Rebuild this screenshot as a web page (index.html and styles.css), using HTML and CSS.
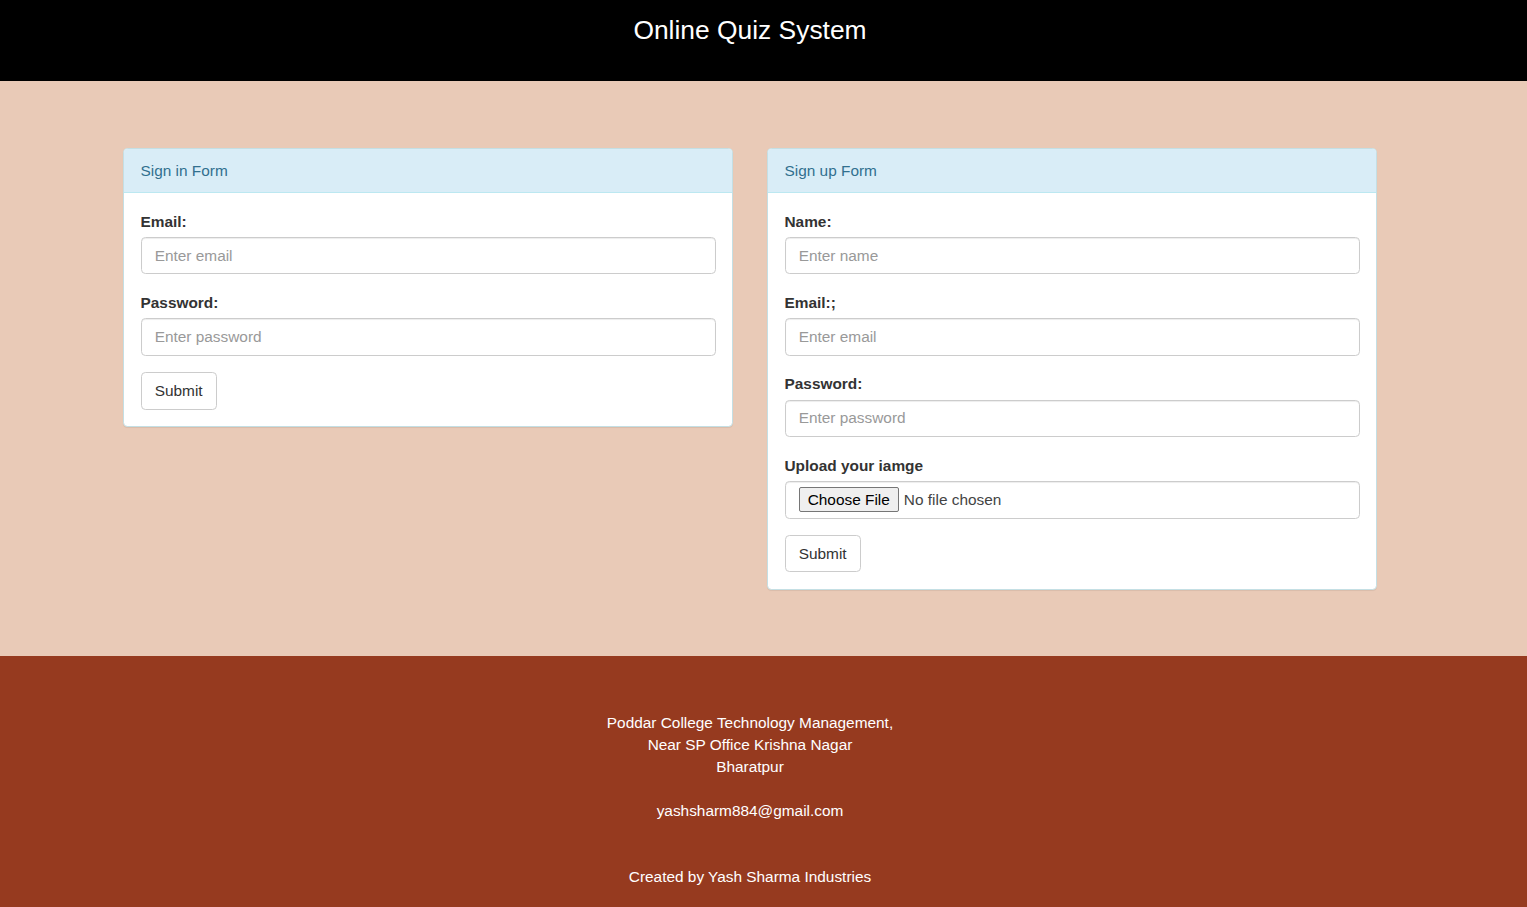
FILE: index.html
```html
<!DOCTYPE html>
<html lang="en">
<head>
<meta charset="utf-8">
<title>Online Quiz System</title>
<link rel="stylesheet" href="styles.css">
</head>
<body>
<header class="topbar">
  <h3 class="site-title">Online Quiz System</h3>
</header>
<main class="main">
  <div class="row">
    <section class="panel">
      <div class="panel-heading">Sign in Form</div>
      <form class="panel-body">
        <div class="form-group">
          <label for="si-email">Email:</label>
          <input id="si-email" class="form-control" type="email" placeholder="Enter email">
        </div>
        <div class="form-group">
          <label for="si-pwd">Password:</label>
          <input id="si-pwd" class="form-control" type="password" placeholder="Enter password">
        </div>
        <button type="button" class="btn">Submit</button>
      </form>
    </section>
    <section class="panel">
      <div class="panel-heading">Sign up Form</div>
      <form class="panel-body">
        <div class="form-group">
          <label for="su-name">Name:</label>
          <input id="su-name" class="form-control" type="text" placeholder="Enter name">
        </div>
        <div class="form-group">
          <label for="su-email">Email:;</label>
          <input id="su-email" class="form-control" type="email" placeholder="Enter email">
        </div>
        <div class="form-group">
          <label for="su-pwd">Password:</label>
          <input id="su-pwd" class="form-control" type="password" placeholder="Enter password">
        </div>
        <div class="form-group">
          <label for="su-file">Upload your iamge</label>
          <div class="form-control file-control">
            <span class="file-btn">Choose File</span>
            <span class="file-name">No file chosen</span>
          </div>
        </div>
        <button type="button" class="btn">Submit</button>
      </form>
    </section>
  </div>
</main>
<footer class="footer">
  <p class="address">Poddar College Technology Management,<br>Near SP Office Krishna Nagar<br>Bharatpur</p>
  <p class="email">yashsharm884@gmail.com</p>
  <p class="credit">Created by Yash Sharma Industries</p>
</footer>
</body>
</html>
```

FILE: styles.css
```css
* { box-sizing: border-box; }
html, body { margin: 0; padding: 0; }
body {
  font-family: "Liberation Sans", Arial, Helvetica, sans-serif;
  font-size: 15.4px;
  line-height: 22px;
  color: #333;
  background: #963a1f;
}
.topbar {
  background: #000;
  height: 81px;
  padding: 16px 27px 0 0;
  text-align: center;
}
.site-title {
  margin: 0;
  font-weight: normal;
  font-size: 26.4px;
  line-height: 29px;
  color: #fff;
}
.main {
  background: #e9cab7;
  padding: 67px 0 66px 123px;
}
.row {
  display: flex;
  align-items: flex-start;
  gap: 34px;
}
.panel {
  width: 610px;
  background: #fff;
  border: 1px solid #c4dfe4;
  border-radius: 4.4px;
  box-shadow: 0 1px 1px rgba(0,0,0,.07);
  overflow: hidden;
}
.panel-heading {
  background: #d9edf7;
  color: #31708f;
  border-bottom: 1px solid #bce8f1;
  padding: 11px 16.5px;
  height: 44px;
}
.panel-body {
  margin: 0;
  padding: 16.5px;
}
.form-group { margin-bottom: 16.5px; }
label {
  display: block;
  font-weight: bold;
  padding-top: 1px;
  margin-bottom: 4.5px;
}
.form-control {
  display: block;
  width: 100%;
  height: 37.4px;
  padding: 6.6px 13.2px;
  font: inherit;
  color: #555;
  background: #fff;
  border: 1px solid #ccc;
  border-radius: 4.4px;
  box-shadow: inset 0 1px 1px rgba(0,0,0,.075);
}
.form-control::placeholder { color: #999; }
.file-control {
  display: flex;
  align-items: center;
  gap: 5px;
  color: #333;
}
.file-btn {
  background: #efefef;
  border: 1px solid #767676;
  border-radius: 2px;
  padding: 0 8px;
  height: 25px;
  line-height: 23px;
  color: #000;
}
.file-name { color: #444; }
.btn {
  display: inline-block;
  height: 37.4px;
  padding: 6.6px 13.2px;
  font: inherit;
  color: #333;
  background: #fff;
  border: 1px solid #ccc;
  border-radius: 4.4px;
  cursor: pointer;
}
.footer {
  color: #fff;
  text-align: center;
  padding: 56px 27px 20px 0;
  min-height: 251px;
}
.footer p { margin: 0; }
.email { margin-top: 22px !important; }
.credit { margin-top: 44px !important; }
```
